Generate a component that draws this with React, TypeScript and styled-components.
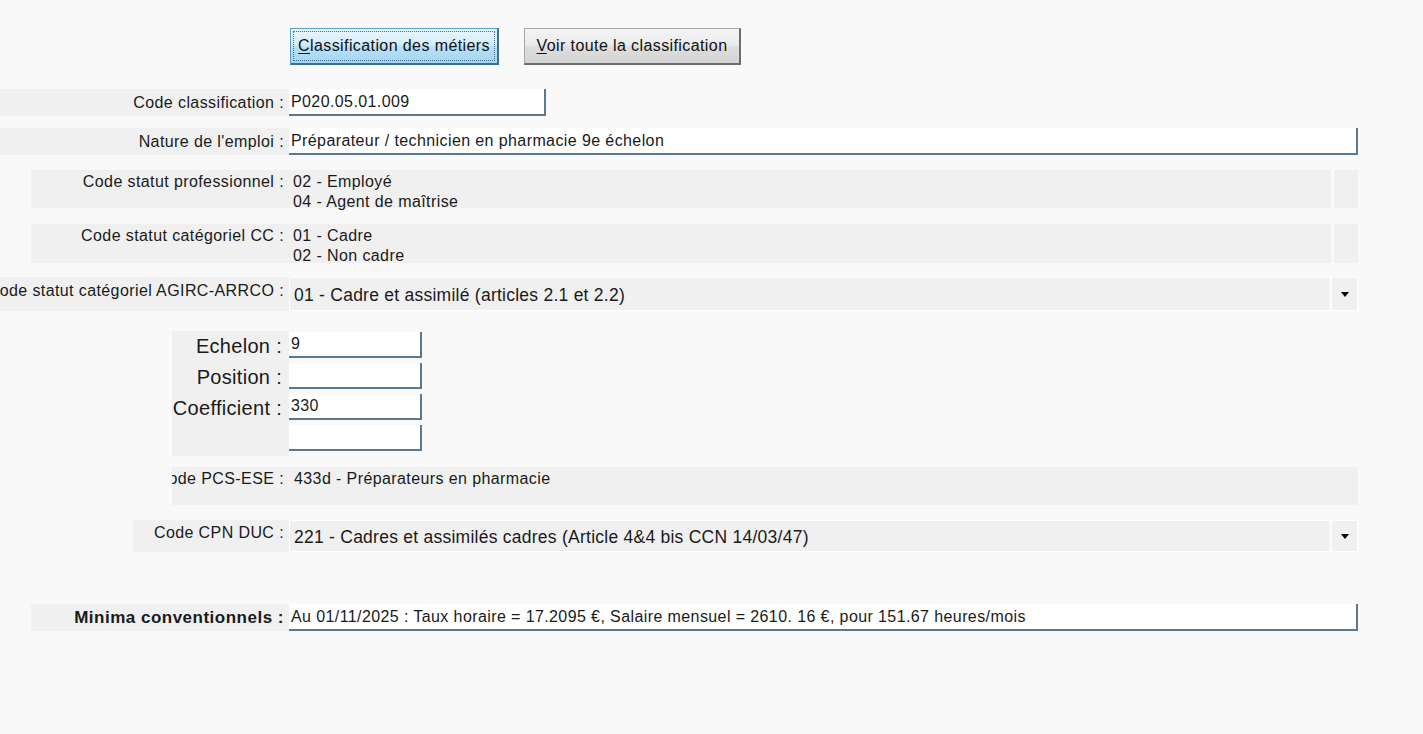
import React from 'react'
import styled, { createGlobalStyle } from 'styled-components'

const GlobalStyle = createGlobalStyle`
  body {
    margin: 0;
    background: #f9f9f9;
    font-family: 'Liberation Sans', Arial, sans-serif;
    color: #1a1a1a;
  }
`

const LABEL_END = 289

const Page = styled.div`
  min-height: 100vh;
  padding-top: 28px;
  box-sizing: border-box;
  font-size: 16px;
  letter-spacing: 0.4px;
`

const ButtonBar = styled.div`
  display: flex;
  gap: 25px;
  margin-left: 290px;
`

const Button = styled.button<{ $focused?: boolean; $width: number }>`
  height: 37px;
  width: ${p => p.$width}px;
  position: relative;
  font-family: 'Liberation Sans', Arial, sans-serif;
  font-size: 16px;
  letter-spacing: 0.4px;
  color: #111;
  padding: 0;
  border: 1px solid ${p => (p.$focused ? '#5b9dc9' : '#a8a8a8')};
  border-right: 2px solid ${p => (p.$focused ? '#3d6f93' : '#6c6c6c')};
  border-bottom: 2px solid ${p => (p.$focused ? '#3d6f93' : '#6c6c6c')};
  background: ${p =>
    p.$focused
      ? 'linear-gradient(#e9f6fd, #d3eefc 45%, #b6e0f8 55%, #a3d6f3)'
      : 'linear-gradient(#f4f4f4, #ebebeb 45%, #dddddd 55%, #d4d4d4)'};
  &::after {
    content: '';
    display: ${p => (p.$focused ? 'block' : 'none')};
    position: absolute;
    inset: 2px;
    border: 1px dotted #4a6d8a;
  }
  u {
    text-decoration-thickness: 1px;
    text-underline-offset: 2px;
  }
`

const Row = styled.div<{ $top: number; $height: number }>`
  display: flex;
  margin-top: ${p => p.$top}px;
  height: ${p => p.$height}px;
`

const Label = styled.div<{ $left: number; $align?: string; $bold?: boolean }>`
  margin-left: ${p => p.$left}px;
  width: ${p => LABEL_END - p.$left}px;
  box-sizing: border-box;
  flex-shrink: 0;
  padding-right: 5px;
  background: #f0f0f0;
  display: flex;
  justify-content: flex-end;
  align-items: ${p => p.$align || 'center'};
  overflow: hidden;
  white-space: nowrap;
  font-weight: ${p => (p.$bold ? 700 : 400)};
  font-size: ${p => (p.$bold ? '17px' : 'inherit')};
  letter-spacing: ${p => (p.$bold ? '0.5px' : 'inherit')};
`

const LabelText = styled.span<{ $pad?: number }>`
  padding-top: ${p => p.$pad ?? 2}px;
  line-height: 20px;
`

const TextField = styled.div<{ $width: number }>`
  width: ${p => p.$width}px;
  box-sizing: border-box;
  background: #fff;
  border-right: 2px solid #5a7890;
  border-bottom: 2px solid #5a7890;
  padding-left: 2px;
  display: flex;
  align-items: center;
  white-space: nowrap;
  overflow: hidden;
`

const ListBox = styled.div`
  display: flex;
  gap: 3px;
  width: 1069px;
`

const ListLines = styled.div`
  flex: 1;
  background: #f0f0f0;
  padding: 2px 0 0 4px;
  line-height: 20px;
`

const ListSide = styled.div`
  width: 24px;
  background: #f0f0f0;
`

const Combo = styled.div<{ $height: number }>`
  display: flex;
  gap: 2px;
  width: 1069px;
  height: ${p => p.$height}px;
  box-sizing: border-box;
  border: 1px solid #fff;
  font-size: 17.5px;
  letter-spacing: 0.25px;
`

const ComboValue = styled.div`
  flex: 1;
  background: #f0f0f0;
  display: flex;
  align-items: center;
  padding-left: 4px;
  padding-top: 2px;
  white-space: nowrap;
`

const ComboArrow = styled.div`
  width: 25px;
  background: #f0f0f0;
  border-left: 1px solid #fff;
  display: flex;
  align-items: center;
  justify-content: center;
  &::before {
    content: '';
    border-left: 4px solid transparent;
    border-right: 4px solid transparent;
    border-top: 5px solid #000;
  }
`

const BlockRow = styled.div<{ $top: number }>`
  display: flex;
  margin-top: ${p => p.$top}px;
`

const LabelColumn = styled.div`
  margin-left: 172px;
  width: 117px;
  box-sizing: border-box;
  padding-right: 7px;
  height: 125px;
  background: #f0f0f0;
  font-size: 20px;
  letter-spacing: 0.3px;
`

const LabelLine = styled.div`
  height: 31px;
  display: flex;
  align-items: center;
  justify-content: flex-end;
  white-space: nowrap;
`

const InputColumn = styled.div`
  display: flex;
  flex-direction: column;
  gap: 5px;
  padding-top: 1px;
`

const SmallField = styled(TextField)`
  height: 26px;
`

const Value = styled.div`
  width: 1069px;
  background: #f0f0f0;
  padding: 2px 0 0 5px;
  box-sizing: border-box;
  line-height: 20px;
`

export default function App() {
  const echelon = [
    { label: 'Echelon :', value: '9' },
    { label: 'Position :', value: '' },
    { label: 'Coefficient :', value: '330' },
    { label: '', value: '' }
  ]

  return (
    <Page>
      <GlobalStyle />
      <ButtonBar>
        <Button $focused $width={209}>
          <u>C</u>lassification des métiers
        </Button>
        <Button $width={217}>
          <u>V</u>oir toute la classification
        </Button>
      </ButtonBar>

      <Row $top={24} $height={27}>
        <Label $left={0}>Code classification :</Label>
        <TextField $width={257}>P020.05.01.009</TextField>
      </Row>

      <Row $top={12} $height={27}>
        <Label $left={0}>Nature de l'emploi :</Label>
        <TextField $width={1069}>Préparateur / technicien en pharmacie 9e échelon</TextField>
      </Row>

      <Row $top={15} $height={38}>
        <Label $left={31} $align='flex-start'>
          <LabelText>Code statut professionnel :</LabelText>
        </Label>
        <ListBox>
          <ListLines>
            <div>02 - Employé</div>
            <div>04 - Agent de maîtrise</div>
          </ListLines>
          <ListSide />
        </ListBox>
      </Row>

      <Row $top={16} $height={39}>
        <Label $left={31} $align='flex-start'>
          <LabelText>Code statut catégoriel CC :</LabelText>
        </Label>
        <ListBox>
          <ListLines>
            <div>01 - Cadre</div>
            <div>02 - Non cadre</div>
          </ListLines>
          <ListSide />
        </ListBox>
      </Row>

      <Row $top={14} $height={34}>
        <Label $left={0} $align='flex-start'>
          <LabelText $pad={4}>Code statut catégoriel AGIRC-ARRCO :</LabelText>
        </Label>
        <Combo $height={34}>
          <ComboValue>01 - Cadre et assimilé (articles 2.1 et 2.2)</ComboValue>
          <ComboArrow />
        </Combo>
      </Row>

      <BlockRow $top={20}>
        <LabelColumn>
          {echelon.map((e, i) => (
            <LabelLine key={i}>{e.label}</LabelLine>
          ))}
        </LabelColumn>
        <InputColumn>
          {echelon.map((e, i) => (
            <SmallField key={i} $width={133}>
              {e.value}
            </SmallField>
          ))}
        </InputColumn>
      </BlockRow>

      <Row $top={11} $height={38}>
        <Label $left={172} $align='flex-start'>
          <LabelText>Code PCS-ESE :</LabelText>
        </Label>
        <Value>433d - Préparateurs en pharmacie</Value>
      </Row>

      <Row $top={15} $height={32}>
        <Label $left={133} $align='flex-start'>
          <LabelText $pad={3}>Code CPN DUC :</LabelText>
        </Label>
        <Combo $height={32}>
          <ComboValue>221 - Cadres et assimilés cadres (Article 4&amp;4 bis CCN 14/03/47)</ComboValue>
          <ComboArrow />
        </Combo>
      </Row>

      <Row $top={52} $height={27}>
        <Label $left={31} $bold>Minima conventionnels :</Label>
        <TextField $width={1069}>
          Au 01/11/2025 : Taux horaire = 17.2095 €, Salaire mensuel = 2610. 16 €, pour 151.67 heures/mois
        </TextField>
      </Row>
    </Page>
  )
}
